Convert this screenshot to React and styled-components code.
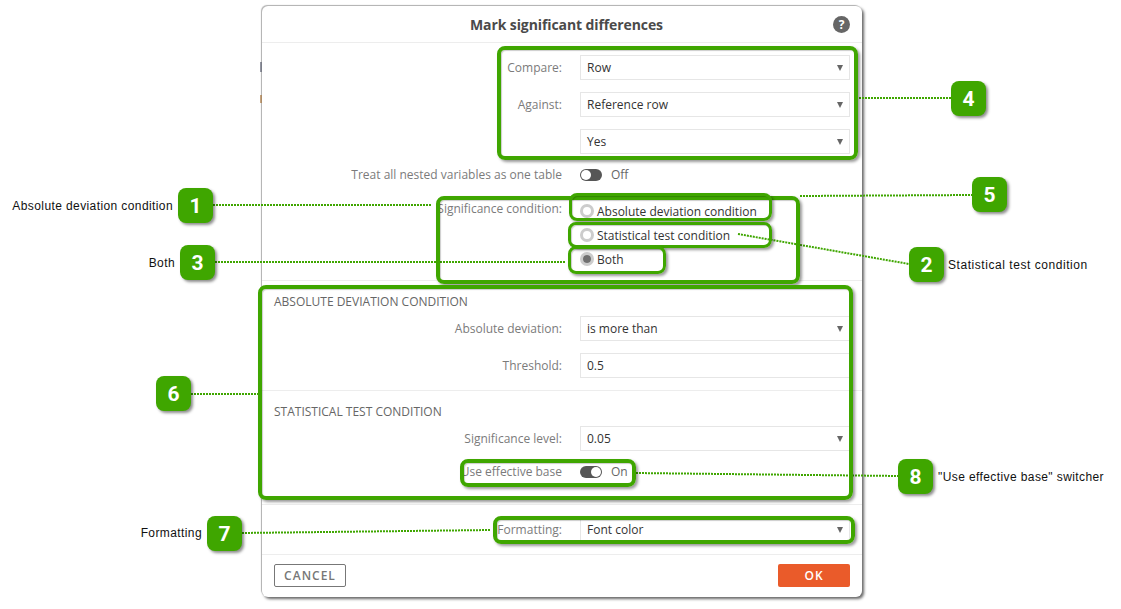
import React from 'react';
import styled, { createGlobalStyle } from 'styled-components';

const GREEN = '#3fa600';

const GlobalStyle = createGlobalStyle`
    html, body {
        margin: 0;
        padding: 0;
        background: #fff;
    }
    body {
        font-family: "Open Sans", "Liberation Sans", sans-serif;
        font-size: 12px;
    }
`;

const Page = styled.div`
    position: relative;
    width: 1121px;
    height: 609px;
    overflow: hidden;
    padding: 6px 0 0 262px;
    box-sizing: border-box;
`;

const Dialog = styled.div`
    width: 600px;
    height: 591px;
    background: #fff;
    border-radius: 6px;
    box-shadow: 2px 2px 3px rgba(0, 0, 0, 0.6), -1px -1px 1px rgba(0, 0, 0, 0.3);
`;

const Header = styled.div`
    display: flex;
    align-items: center;
    justify-content: space-between;
    box-sizing: border-box;
    height: 37px;
    padding: 0 12px 0 208px;
    border-bottom: 1px solid #ededed;
`;

const Title = styled.div`
    font-size: 14px;
    font-weight: 700;
    letter-spacing: -0.1px;
    color: #4a4a4a;
`;

const Help = styled.div`
    display: flex;
    align-items: center;
    justify-content: center;
    width: 17px;
    height: 17px;
    border-radius: 50%;
    background: #666;
    color: #fff;
    font-size: 12px;
    font-weight: 700;
`;

const Section = styled.div`
    padding: ${props => props.$top}px 12px ${props => props.$bottom}px;
    border-bottom: 1px solid #ededed;
`;

const SectionTitle = styled.div`
    height: 16px;
    line-height: 16px;
    margin: 1px 0 6px;
    color: #666;
`;

const Row = styled.div`
    display: grid;
    grid-template-columns: 1fr 270px;
    column-gap: 18px;
    align-items: ${props => props.$start ? 'start' : 'center'};
    min-height: 25px;
    margin-bottom: ${props => props.$after || 0}px;
`;

const Label = styled.div`
    padding-top: ${props => props.$nudge ? 1 : 0}px;
    text-align: right;
    color: #7b7b7b;
    line-height: 18px;
`;

const Select = styled.div`
    display: flex;
    align-items: center;
    justify-content: space-between;
    box-sizing: border-box;
    height: 25px;
    padding: 0 6px;
    border: 1px solid #e6e6e6;
    color: #333;

    &::after {
        content: '';
        border-left: 3px solid transparent;
        border-right: 3px solid transparent;
        border-top: 6px solid ${props => props.$input ? 'transparent' : '#666'};
    }
`;

const ToggleWrap = styled.div`
    display: flex;
    align-items: center;
    gap: 9px;
    color: #666;
`;

const Track = styled.div`
    display: flex;
    justify-content: ${props => props.$on ? 'flex-end' : 'flex-start'};
    box-sizing: border-box;
    width: 22px;
    height: 12px;
    padding: 1px;
    border-radius: 6px;
    background: #565656;
`;

const Knob = styled.div`
    width: 10px;
    height: 10px;
    border-radius: 50%;
    background: #fff;
`;

const Radios = styled.div`
    display: flex;
    flex-direction: column;
`;

const RadioRow = styled.div`
    display: flex;
    align-items: center;
    gap: 3px;
    height: 24px;
    color: #333;
`;

const Radio = styled.div`
    display: flex;
    align-items: center;
    justify-content: center;
    box-sizing: border-box;
    width: 14px;
    height: 14px;
    border-radius: 50%;
    border: 3px solid #ccc;
    background: #fff;

    &::after {
        content: '';
        width: 8px;
        height: 8px;
        border-radius: 50%;
        background: ${props => props.$checked ? '#707070' : 'transparent'};
    }
`;

const Footer = styled.div`
    display: flex;
    justify-content: space-between;
    padding: 9px 12px 10px;
`;

const CancelButton = styled.div`
    display: flex;
    align-items: center;
    justify-content: center;
    box-sizing: border-box;
    width: 72px;
    height: 23px;
    border: 1px solid #777;
    border-radius: 2px;
    color: #777;
    font-weight: 600;
    letter-spacing: 1px;
`;

const OkButton = styled(CancelButton)`
    border: none;
    background: #ea5b2a;
    color: #fff;
`;

// bits of the page behind the dialog that stick out past its left edge
const Sliver = styled.div`
    position: absolute;
    left: 260px;
    top: ${props => props.$y}px;
    width: 2px;
    height: ${props => props.$h}px;
    background: ${props => props.$color};
    opacity: 0.65;
`;

const Connectors = styled.svg`
    position: absolute;
    left: 0;
    top: 0;
    width: 1121px;
    height: 609px;
    pointer-events: none;
`;

const Highlight = styled.div`
    position: absolute;
    left: ${props => props.$x}px;
    top: ${props => props.$y}px;
    width: ${props => props.$w}px;
    height: ${props => props.$h}px;
    box-sizing: border-box;
    border: ${props => props.$thin ? 3 : 4}px solid ${GREEN};
    border-radius: 8px;
    box-shadow: 2px 2px 3px rgba(0, 0, 0, 0.4), inset 1px 1px 1px rgba(0, 0, 0, 0.2);
`;

const Badge = styled.div`
    position: absolute;
    left: ${props => props.$x}px;
    top: ${props => props.$y}px;
    display: flex;
    align-items: center;
    justify-content: center;
    width: 35px;
    height: 35px;
    border-radius: 8px;
    background: ${GREEN};
    box-shadow: 2px 2px 3px rgba(0, 0, 0, 0.45);
    color: #fff;
    font-family: "Roboto", "Liberation Sans", sans-serif;
    font-size: 21px;
    font-weight: 700;
`;

const Note = styled.div`
    position: absolute;
    ${props => props.$right !== undefined ? `right: ${1121 - props.$right}px;` : `left: ${props.$x}px;`}
    top: ${props => props.$y}px;
    font-family: "Liberation Sans", Arial, sans-serif;
    font-size: 12px;
    letter-spacing: ${props => props.$spacing || 0.4}px;
    line-height: 14px;
    color: #111;
    white-space: nowrap;
`;

const HIGHLIGHTS = [
    { x: 497, y: 46, w: 361, h: 114 },
    { x: 436, y: 196, w: 364, h: 88 },
    { x: 569, y: 193, w: 203, h: 28, thin: true },
    { x: 568, y: 222, w: 204, h: 26, thin: true },
    { x: 568, y: 246, w: 98, h: 28, thin: true },
    { x: 258, y: 285, w: 595, h: 215 },
    { x: 460, y: 459, w: 176, h: 28 },
    { x: 493, y: 516, w: 362, h: 28 },
];

const BADGES = [
    { n: 1, x: 178, y: 188 },
    { n: 2, x: 909, y: 247 },
    { n: 3, x: 180, y: 245 },
    { n: 4, x: 951, y: 81 },
    { n: 5, x: 972, y: 177 },
    { n: 6, x: 156, y: 376 },
    { n: 7, x: 207, y: 516 },
    { n: 8, x: 898, y: 459 },
];

const LINES = [
    [213, 205, 432, 205],
    [738, 234, 909, 264],
    [215, 262, 566, 262],
    [859, 98, 951, 98],
    [800, 196, 972, 195],
    [191, 394, 258, 394],
    [242, 533, 490, 530],
    [636, 473, 898, 476],
];

const Toggle = ({ on }) => (
    <ToggleWrap>
        <Track $on={on}><Knob /></Track>
        {on ? 'On' : 'Off'}
    </ToggleWrap>
);

export default function App() {
    return (
        <Page>
            <GlobalStyle />
            <Dialog>
                <Header>
                    <Title>Mark significant differences</Title>
                    <Help>?</Help>
                </Header>
                <Section $top={12} $bottom={9}>
                    <Row $after={12}><Label>Compare:</Label><Select>Row</Select></Row>
                    <Row $after={12}><Label>Against:</Label><Select>Reference row</Select></Row>
                    <Row $after={8}><Label /><Select>Yes</Select></Row>
                    <Row $after={12}><Label>Treat all nested variables as one table</Label><Toggle /></Row>
                    <Row $start>
                        <Label $nudge>Significance condition:</Label>
                        <Radios>
                            <RadioRow><Radio />Absolute deviation condition</RadioRow>
                            <RadioRow><Radio />Statistical test condition</RadioRow>
                            <RadioRow><Radio $checked />Both</RadioRow>
                        </Radios>
                    </Row>
                </Section>
                <Section $top={12} $bottom={12}>
                    <SectionTitle>ABSOLUTE DEVIATION CONDITION</SectionTitle>
                    <Row $after={12}><Label>Absolute deviation:</Label><Select>is more than</Select></Row>
                    <Row><Label>Threshold:</Label><Select $input>0.5</Select></Row>
                </Section>
                <Section $top={12} $bottom={20}>
                    <SectionTitle>STATISTICAL TEST CONDITION</SectionTitle>
                    <Row $after={8}><Label>Significance level:</Label><Select>0.05</Select></Row>
                    <Row><Label>Use effective base</Label><Toggle on /></Row>
                </Section>
                <Section $top={12} $bottom={12}>
                    <Row><Label>Formatting:</Label><Select>Font color</Select></Row>
                </Section>
                <Footer>
                    <CancelButton>CANCEL</CancelButton>
                    <OkButton>OK</OkButton>
                </Footer>
            </Dialog>

            <Sliver $y={62} $h={10} $color="#5b6070" />
            <Sliver $y={95} $h={8} $color="#a8743c" />

            <Connectors viewBox="0 0 1121 609">
                {LINES.map(([x1, y1, x2, y2]) => (
                    <line key={`${x1}-${y1}`} x1={x1} y1={y1} x2={x2} y2={y2} stroke={GREEN} strokeWidth="2" strokeDasharray="2 1" />
                ))}
            </Connectors>
            {HIGHLIGHTS.map(h => <Highlight key={`${h.x}-${h.y}`} $x={h.x} $y={h.y} $w={h.w} $h={h.h} $thin={h.thin} />)}
            {BADGES.map(b => <Badge key={b.n} $x={b.x} $y={b.y}>{b.n}</Badge>)}

            <Note $right={173} $y={199}>Absolute deviation condition</Note>
            <Note $right={175} $y={256}>Both</Note>
            <Note $right={202} $y={526}>Formatting</Note>
            <Note $x={948} $y={258} $spacing={0.55}>Statistical test condition</Note>
            <Note $x={938} $y={470}>"Use effective base" switcher</Note>
        </Page>
    );
}
